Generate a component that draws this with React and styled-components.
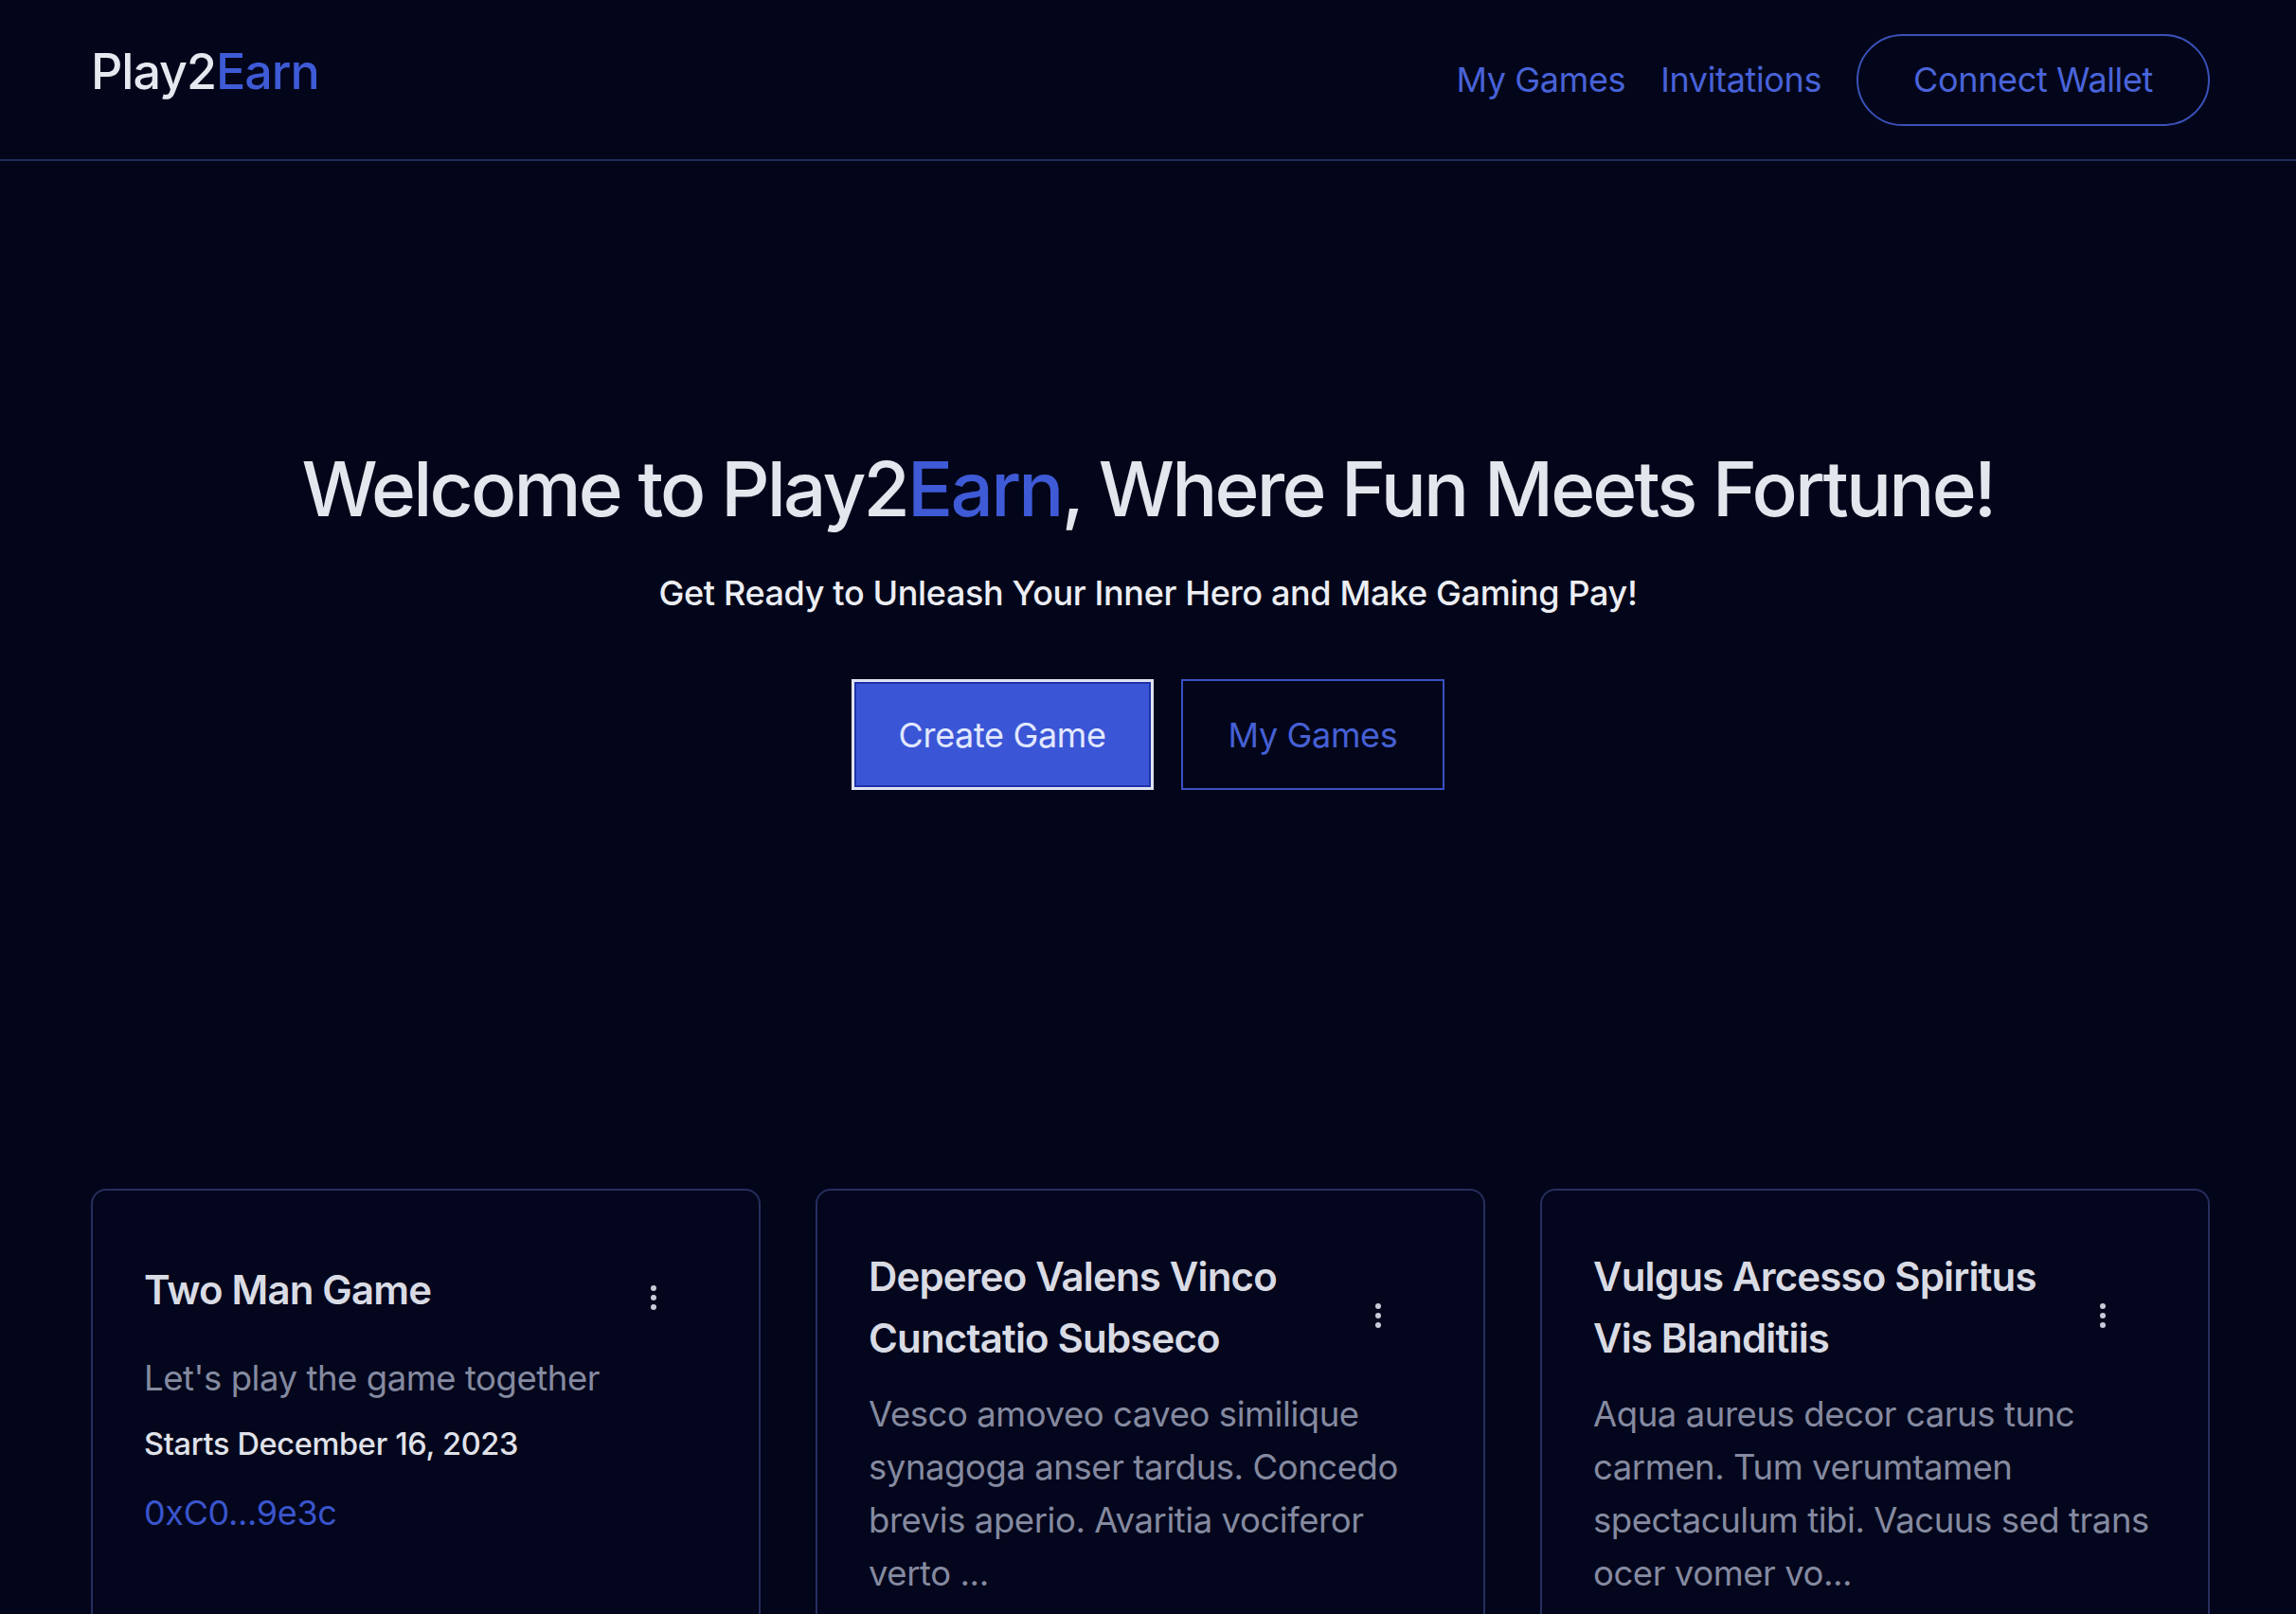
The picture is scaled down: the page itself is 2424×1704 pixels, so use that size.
import React from "react";
import styled, { createGlobalStyle } from "styled-components";

const GlobalStyle = createGlobalStyle`
  html, body {
    margin: 0;
    padding: 0;
    background: #03061a;
  }
  body {
    font-family: Inter, "Noto Sans", "Liberation Sans", sans-serif;
    color: #e4e6ee;
    -webkit-font-smoothing: antialiased;
  }
  * { box-sizing: border-box; }
`;

const Page = styled.div`
  min-height: 100vh;
  background: #03061a;
`;

const Nav = styled.header`
  display: flex;
  align-items: center;
  justify-content: space-between;
  height: 170px;
  padding: 0 91px 0 96px;
  border-bottom: 2px solid #1f2a5c;
`;

const Logo = styled.div`
  font-size: 52px;
  font-weight: 500;
  letter-spacing: -0.02em;
  color: #e6e8f0;
  margin-bottom: 18px;
`;

const Accent = styled.span`
  color: #3e5ad6;
`;

const NavRight = styled.nav`
  display: flex;
  align-items: center;
  gap: 37px;
`;

const NavLink = styled.a`
  font-size: 36px;
  color: #4862d8;
  text-decoration: none;
  letter-spacing: -0.01em;
`;

const WalletButton = styled.button`
  height: 97px;
  padding: 0 58px;
  border-radius: 60px;
  border: 2px solid #3a50b8;
  background: transparent;
  color: #4a64da;
  font-family: inherit;
  font-size: 36px;
  letter-spacing: -0.01em;
`;

const Hero = styled.section`
  display: flex;
  flex-direction: column;
  align-items: center;
  padding-top: 298px;
`;

const Title = styled.h1`
  margin: 0;
  font-size: 80px;
  line-height: 96px;
  font-weight: 500;
  letter-spacing: -0.035em;
  color: #e4e6ee;
`;

const Subtitle = styled.p`
  margin: 35px 0 0;
  font-size: 36px;
  line-height: 54px;
  font-weight: 500;
  letter-spacing: -0.01em;
  color: #eceef4;
`;

const Actions = styled.div`
  display: flex;
  gap: 29px;
  margin-top: 64px;
`;

const HeroButton = styled.button`
  height: 117px;
  padding: 0 ${(p) => (p.$primary ? "47px" : "48px")};
  font-family: inherit;
  font-size: 36px;
  letter-spacing: -0.01em;
  border-radius: 0;
  background: ${(p) => (p.$primary ? "#3a56d6" : "transparent")};
  color: ${(p) => (p.$primary ? "#e2e8ff" : "#4660d4")};
  border: ${(p) => (p.$primary ? "3px solid #dfe3f0" : "2px solid #3a50c4")};
  box-shadow: ${(p) => (p.$primary ? "inset 0 0 0 2px #1f33a8" : "none")};
`;

const Cards = styled.section`
  display: grid;
  grid-template-columns: repeat(3, 1fr);
  gap: 58px;
  padding: 0 91px 0 96px;
  margin-top: 421px;
`;

const Card = styled.article`
  min-height: 620px;
  padding: 58px 48px 58px 54px;
  border: 2px solid #262e5e;
  border-radius: 16px;
  background: #03061c;
`;

const CardHeader = styled.div`
  display: flex;
  align-items: center;
  padding-right: 28px;
`;

const CardTitle = styled.h3`
  flex: 1;
  margin: 0;
  font-size: 42px;
  line-height: 65px;
  font-weight: 600;
  letter-spacing: -0.02em;
  color: #d9dbe4;
`;

const MenuButton = styled.button`
  flex: none;
  width: 70px;
  height: 92px;
  display: flex;
  align-items: center;
  justify-content: center;
  padding: 18px 0 0;
  background: transparent;
  border: none;
  color: #c9ccd8;
`;

const Description = styled.p`
  margin: 20px 0 0;
  font-size: 36.5px;
  line-height: 56px;
  letter-spacing: -0.012em;
  color: #858aa0;
`;

const StartDate = styled.p`
  margin: 14px 0 0;
  font-size: 32.5px;
  line-height: 56px;
  font-weight: 500;
  letter-spacing: -0.01em;
  color: #e0e2ea;
`;

const Address = styled.a`
  display: block;
  margin-top: 16px;
  font-size: 36px;
  line-height: 56px;
  color: #3a54cc;
  text-decoration: none;
  letter-spacing: -0.01em;
`;

const Kebab = () => (
  <svg width="8" height="28" viewBox="0 0 8 28" fill="currentColor">
    <circle cx="4" cy="4" r="3" />
    <circle cx="4" cy="14" r="3" />
    <circle cx="4" cy="24" r="3" />
  </svg>
);

const games = [
  {
    title: "Two Man Game",
    description: "Let's play the game together",
    date: "Starts December 16, 2023",
    address: "0xC0...9e3c",
  },
  {
    title: "Depereo Valens Vinco Cunctatio Subseco",
    description:
      "Vesco amoveo caveo similique synagoga anser tardus. Concedo brevis aperio. Avaritia vociferor verto ...",
  },
  {
    title: "Vulgus Arcesso Spiritus Vis Blanditiis",
    description:
      "Aqua aureus decor carus tunc carmen. Tum verumtamen spectaculum tibi. Vacuus sed trans ocer vomer vo...",
  },
];

export default function App() {
  return (
    <Page>
      <GlobalStyle />
      <Nav>
        <Logo>
          Play2<Accent>Earn</Accent>
        </Logo>
        <NavRight>
          <NavLink href="#">My Games</NavLink>
          <NavLink href="#">Invitations</NavLink>
          <WalletButton>Connect Wallet</WalletButton>
        </NavRight>
      </Nav>

      <Hero>
        <Title>
          Welcome to Play2<Accent>Earn</Accent>, Where Fun Meets Fortune!
        </Title>
        <Subtitle>Get Ready to Unleash Your Inner Hero and Make Gaming Pay!</Subtitle>
        <Actions>
          <HeroButton $primary>Create Game</HeroButton>
          <HeroButton>My Games</HeroButton>
        </Actions>
      </Hero>

      <Cards>
        {games.map((g) => (
          <Card key={g.title}>
            <CardHeader>
              <CardTitle>{g.title}</CardTitle>
              <MenuButton aria-label="menu">
                <Kebab />
              </MenuButton>
            </CardHeader>
            <Description>{g.description}</Description>
            {g.date && <StartDate>{g.date}</StartDate>}
            {g.address && <Address href="#">{g.address}</Address>}
          </Card>
        ))}
      </Cards>
    </Page>
  );
}
